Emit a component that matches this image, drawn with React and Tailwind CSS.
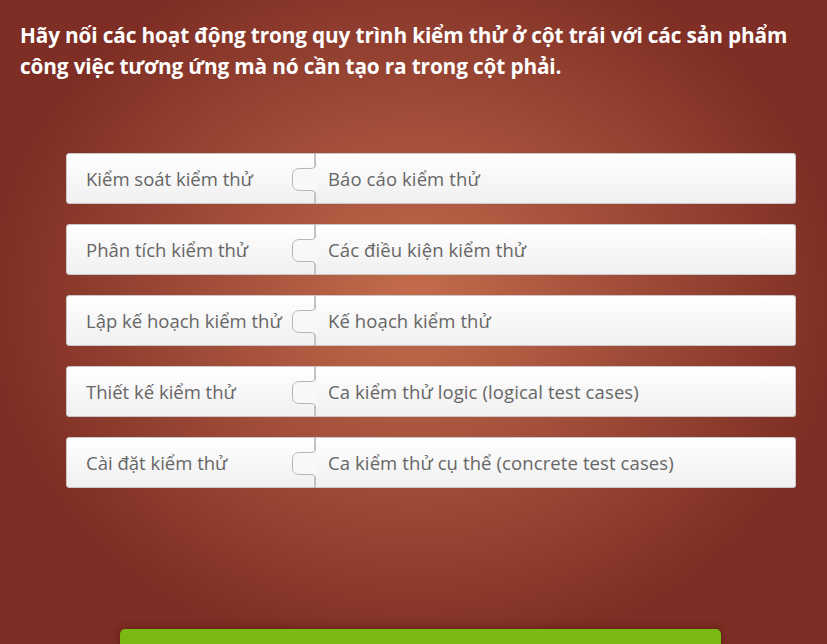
const PAIRS = [
  ['Kiểm soát kiểm thử', 'Báo cáo kiểm thử'],
  ['Phân tích kiểm thử', 'Các điều kiện kiểm thử'],
  ['Lập kế hoạch kiểm thử', 'Kế hoạch kiểm thử'],
  ['Thiết kế kiểm thử', 'Ca kiểm thử logic (logical test cases)'],
  ['Cài đặt kiểm thử', 'Ca kiểm thử cụ thể (concrete test cases)'],
]

// puzzle knob of the right piece, sticking into the left one
function Tab() {
  return (
    <svg
      className="absolute left-[-24px] top-[9px] z-10"
      width="26"
      height="33"
      viewBox="0 0 26 33"
    >
      <path
        d="M24.5 0 L24.5 2 C24.5 4.5 22 5.5 19.5 5.5 L9 5.5 C4 5.5 1.5 8 1.5 12 L1.5 21 C1.5 25 4 27.5 9 27.5 L19.5 27.5 C22 27.5 24.5 28.5 24.5 31 L24.5 33 L26 33 L26 0 Z"
        fill="#f8f8f8"
      />
      <path
        d="M24.5 0 L24.5 2 C24.5 4.5 22 5.5 19.5 5.5 L9 5.5 C4 5.5 1.5 8 1.5 12 L1.5 21 C1.5 25 4 27.5 9 27.5 L19.5 27.5 C22 27.5 24.5 28.5 24.5 31 L24.5 33"
        fill="none"
        stroke="#b5b5b5"
        strokeWidth="1"
      />
    </svg>
  )
}

export default function App() {
  return (
    <div
      className="w-[827px] h-[644px] overflow-hidden relative bg-[radial-gradient(ellipse_420px_360px_at_415px_300px,#c46d4d_0%,#a4503b_45%,#7e2e24_100%)]"
      style={{ fontFamily: '"Segoe UI", "Open Sans", "Noto Sans", sans-serif' }}
    >
      <h1 className="pl-5 pr-3 pt-[20px] text-white font-bold text-[20.8px] leading-[31px] tracking-[-0.15px]">
        Hãy nối các hoạt động trong quy trình kiểm thử ở cột trái với các sản phẩm công việc tương ứng mà nó cần tạo ra trong cột phải.
      </h1>

      <div className="mt-[71px] ml-[66px] w-[730px] flex flex-col gap-[20px]">
        {PAIRS.map(([left, right]) => (
          <div key={left} className="flex h-[51px]">
            <div className="w-[249px] h-full rounded-l-[3px] border border-[#c8c8c8] bg-gradient-to-b from-white to-[#f0f0f0] flex items-center pl-[19px] text-[18.5px] text-[#666]">
              {left}
            </div>
            <div className="relative flex-1 h-full rounded-r-[3px] border border-l-0 border-[#c8c8c8] bg-gradient-to-b from-white to-[#f0f0f0] flex items-center pl-[13px] text-[18.5px] tracking-[0.1px] text-[#666]">
              <div className="absolute left-0 top-0 bottom-0 w-px bg-[#c0c0c0]" />
              <Tab />
              {right}
            </div>
          </div>
        ))}
      </div>

      <div className="absolute left-[120px] top-[629px] w-[601px] h-[40px] rounded-[5px] bg-[#7ab812] shadow-[0_0_8px_rgba(60,10,0,0.5)]" />
    </div>
  )
}
